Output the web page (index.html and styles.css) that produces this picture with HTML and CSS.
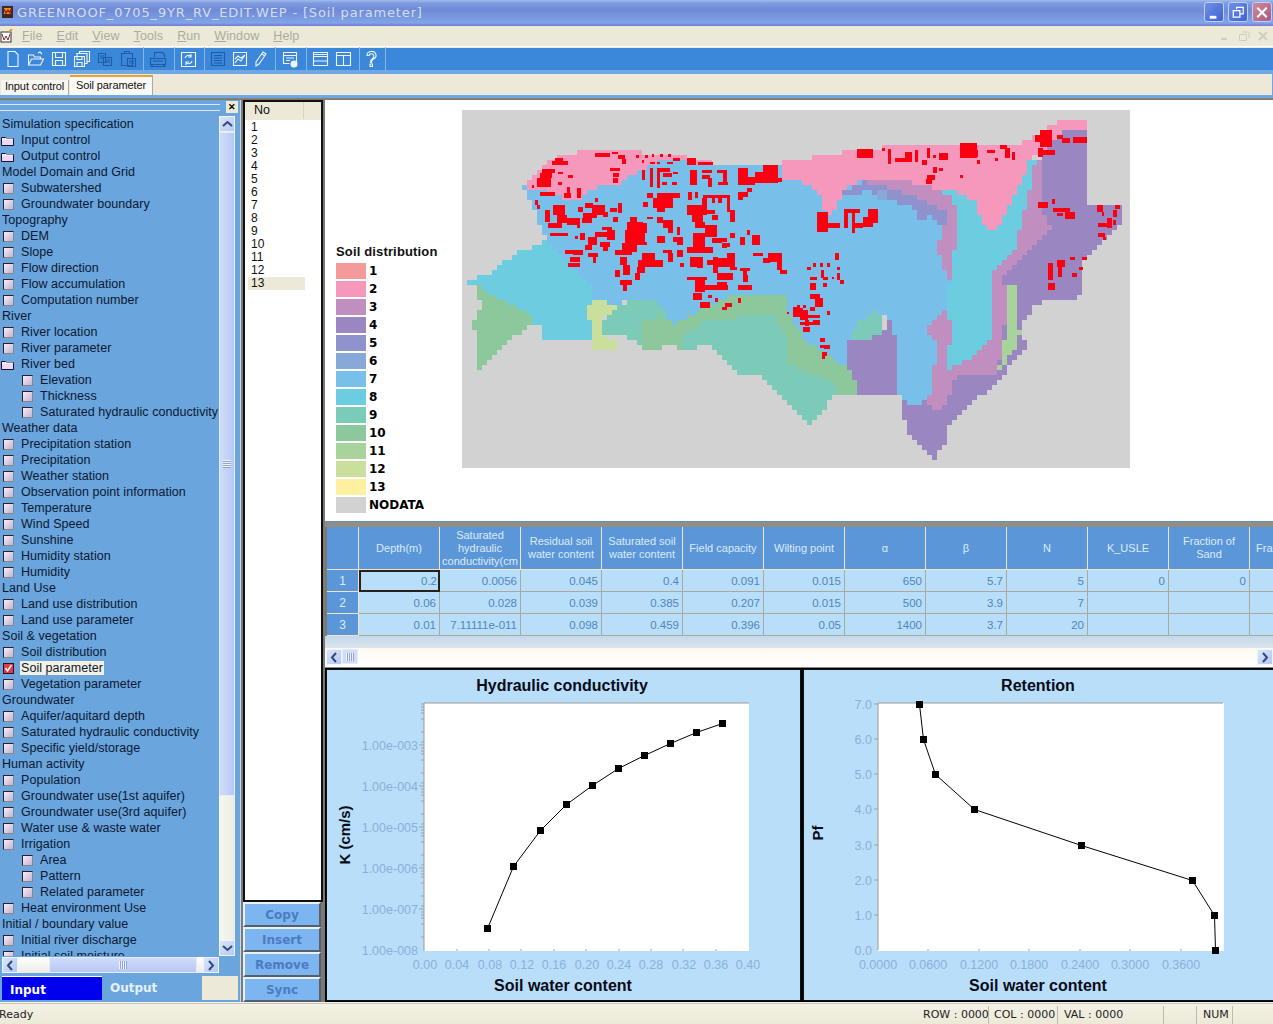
FILE: index.html
```
<!DOCTYPE html>
<html lang="en">
<head>
<meta charset="utf-8">
<title>GREENROOF_0705_9YR_RV_EDIT.WEP - [Soil parameter]</title>
<link rel="stylesheet" href="styles.css">
</head>
<body>
<div class="app">
  <header class="titlebar">
    <svg class="appicon" width="14" height="16" viewBox="0 0 14 16"><rect x="1" y="2" width="11" height="12" fill="#3a2a20"/><rect x="3" y="4" width="7" height="6" fill="#e0a020"/><path d="M3 5l2 4 2-3 2 3 1-4" fill="none" stroke="#b01818" stroke-width="1.5"/></svg>
    <span class="title">GREENROOF_0705_9YR_RV_EDIT.WEP - [Soil parameter]</span>
    <div class="winbtns">
      <span class="winbtn"><svg width="19" height="19" viewBox="0 0 19 19"><rect x="5" y="13" width="7" height="3" fill="#fff"/></svg></span>
      <span class="winbtn"><svg width="19" height="19" viewBox="0 0 19 19"><path d="M8 6V4h7v7h-3M4.500 7.500h7v7h-7z" fill="none" stroke="#fff" stroke-width="1.300"/></svg></span>
      <span class="winbtn close"><svg width="19" height="19" viewBox="0 0 19 19"><path d="M4.500 4.500l10 10M14.500 4.500l-10 10" stroke="#fff" stroke-width="2.200"/></svg></span>
    </div>
  </header>

  <nav class="menubar">
    <svg class="menuicon" width="13" height="15" viewBox="0 0 13 15"><rect x="1" y="3" width="10" height="10" fill="#fff" stroke="#333"/><path d="M2 5l2 6 2-4 2 4 2-6" fill="none" stroke="#8a2a20"/><path d="M9 3l3-3" stroke="#d0a020" stroke-width="2"/></svg>
    <span class="menuitem"><u>F</u>ile</span>
    <span class="menuitem"><u>E</u>dit</span>
    <span class="menuitem"><u>V</u>iew</span>
    <span class="menuitem"><u>T</u>ools</span>
    <span class="menuitem"><u>R</u>un</span>
    <span class="menuitem"><u>W</u>indow</span>
    <span class="menuitem"><u>H</u>elp</span>
    <div class="mdibtns">
      <svg width="19" height="14" viewBox="0 0 19 14"><rect x="5" y="9" width="6" height="2" fill="#d0cfc2"/></svg>
      <svg width="19" height="14" viewBox="0 0 19 14"><path d="M7 3h7v6M4.500 5.500h7v6h-7z" fill="none" stroke="#cfcec0"/></svg>
      <svg width="19" height="14" viewBox="0 0 19 14"><path d="M5 3l8 8M13 3l-8 8" stroke="#cfcec0" stroke-width="2"/></svg>
    </div>
  </nav>

  <div class="toolbar">
    <svg class="tool" width="16" height="18" viewBox="0 0 16 18"><path d="M3 1.500h7l3 3v12H3z"/></svg>
    <svg class="tool" width="18" height="18" viewBox="0 0 18 18"><path d="M1.500 15V5h5l1 2h6v2M1.500 15l3-6h12l-3 6zM11 3l2-1 2 2"/></svg>
    <svg class="tool" width="16" height="18" viewBox="0 0 16 18"><path d="M1.500 2.500h13v13h-13zM4.500 2.500v5h7v-5M4.500 15.500v-5h7v5"/></svg>
    <svg class="tool" width="18" height="18" viewBox="0 0 18 18"><path d="M6.500 3.500v-2h10v10h-2M4 6V3.500h10v10h-2M1.500 6.500h10v10h-10zM4 6.500v3h5v-3M4 16.500v-4h5v4"/></svg>
    <svg class="tool dim" width="16" height="18" viewBox="0 0 16 18"><path d="M1.500 3.500h7v9h-7zM6.500 7.500h8v8h-8zM3 6h4M3 8h3M8 10h5M8 12h5"/></svg>
    <svg class="tool dim" width="18" height="18" viewBox="0 0 18 18"><path d="M2.500 3.500h11v12h-11zM5.500 3.500v-2h5v2M8.500 8.500h8v8h-8zM10 11h5M10 13h5"/></svg>
    <i class="sep first"></i>
    <svg class="tool dim" width="18" height="18" viewBox="0 0 18 18"><path d="M5.500 7.500v-5h8l2 2v3M1.500 8.500h15v6h-15zM4 14.500l-2 2h14l-2-2M4 11h10"/></svg>
    <i class="sep"></i>
    <svg class="tool" width="17" height="18" viewBox="0 0 17 18"><path d="M1.500 2.500h14v14h-14zM5 8a3.500 3.500 0 0 1 6-1.500M12 11a3.500 3.500 0 0 1-6 1.500M11 4v3h-3M6 15v-3h3"/></svg>
    <i class="sep"></i>
    <svg class="tool dim" width="16" height="18" viewBox="0 0 16 18"><path d="M1.500 2.500h13v13h-13zM4 5.500h8M4 8h8M4 10.500h8M4 13h8"/></svg>
    <svg class="tool" width="16" height="18" viewBox="0 0 16 18"><path d="M1.500 2.500h13v13h-13zM3 13l3-4 3 2 4-6M3 9l3-3 3 2 4-3"/></svg>
    <svg class="tool" width="14" height="18" viewBox="0 0 14 18"><path d="M9 2l3 2-7 10-3 2v-4zM8 4l3 2"/></svg>
    <i class="sep"></i>
    <svg class="tool" width="18" height="18" viewBox="0 0 18 18"><path d="M2.500 2.500h13v11h-4M2.500 5.500h13M2.500 2.500v11h6M5 8h8M5 10.500h4"/><circle class="fillw" cx="13" cy="14" r="3.500"/></svg>
    <i class="sep"></i>
    <svg class="tool" width="17" height="18" viewBox="0 0 17 18"><path d="M1.500 2.500h14v13h-14zM1.500 6.500h14M1.500 11h14M1.500 4.500h14"/></svg>
    <svg class="tool" width="17" height="18" viewBox="0 0 17 18"><path d="M1.500 2.500h14v13h-14zM1.500 5.500h14M8.500 5.500v10"/></svg>
    <i class="sep"></i>
    <svg class="tool" width="13" height="18" viewBox="0 0 13 18"><path d="M2 5.500a4.500 4 0 1 1 6.500 3.500c-1.500 1-2 1.500-2 3.500h-1c0-2.500 1-3.500 2-4a2.500 2.500 0 1 0-3.500-3zM5 14h2.500v2.500H5z"/></svg>
    <i class="sep"></i>
  </div>

  <div class="tabstrip">
    <div class="tabs">
      <span class="tab">Input control</span>
      <span class="tab active">Soil parameter</span>
    </div>
  </div>

  <main class="workspace">
    <aside class="tree">
      <div class="grip"><span class="griplines"></span><span class="closebox">✕</span></div>
      <div class="treebody">
        <ul class="rows">
          <li class="row">Simulation specification</li>
          <li class="row"><svg class="folder" width="13" height="11" viewBox="0 0 13 11"><path d="M.5 2.500h4l1 1h7v7H.5z" fill="#f0d8f4" stroke="#201030"/><path d="M1 4h11" stroke="#fff"/></svg>Input control</li>
          <li class="row"><svg class="folder" width="13" height="11" viewBox="0 0 13 11"><path d="M.5 2.500h4l1 1h7v7H.5z" fill="#f0d8f4" stroke="#201030"/><path d="M1 4h11" stroke="#fff"/></svg>Output control</li>
          <li class="row">Model Domain and Grid</li>
          <li class="row"><i class="box"></i>Subwatershed</li>
          <li class="row"><i class="box"></i>Groundwater boundary</li>
          <li class="row">Topography</li>
          <li class="row"><i class="box"></i>DEM</li>
          <li class="row"><i class="box"></i>Slope</li>
          <li class="row"><i class="box"></i>Flow direction</li>
          <li class="row"><i class="box"></i>Flow accumulation</li>
          <li class="row"><i class="box"></i>Computation number</li>
          <li class="row">River</li>
          <li class="row"><i class="box"></i>River location</li>
          <li class="row"><i class="box"></i>River parameter</li>
          <li class="row"><svg class="folder" width="13" height="11" viewBox="0 0 13 11"><path d="M.5 2.500h4l1 1h7v7H.5z" fill="#f0d8f4" stroke="#201030"/><path d="M1 4h11" stroke="#fff"/></svg>River bed</li>
          <li class="row sub"><i class="box"></i>Elevation</li>
          <li class="row sub"><i class="box"></i>Thickness</li>
          <li class="row sub"><i class="box"></i>Saturated hydraulic conductivity</li>
          <li class="row">Weather data</li>
          <li class="row"><i class="box"></i>Precipitation station</li>
          <li class="row"><i class="box"></i>Precipitation</li>
          <li class="row"><i class="box"></i>Weather station</li>
          <li class="row"><i class="box"></i>Observation point information</li>
          <li class="row"><i class="box"></i>Temperature</li>
          <li class="row"><i class="box"></i>Wind Speed</li>
          <li class="row"><i class="box"></i>Sunshine</li>
          <li class="row"><i class="box"></i>Humidity station</li>
          <li class="row"><i class="box"></i>Humidity</li>
          <li class="row">Land Use</li>
          <li class="row"><i class="box"></i>Land use distribution</li>
          <li class="row"><i class="box"></i>Land use parameter</li>
          <li class="row">Soil &amp; vegetation</li>
          <li class="row"><i class="box"></i>Soil distribution</li>
          <li class="row"><svg class="checkbox" width="11" height="11" viewBox="0 0 11 11"><rect x=".5" y=".5" width="10" height="10" fill="#e8384a" stroke="#301018"/><path d="M2.500 5l2 3 4-6" fill="none" stroke="#fff" stroke-width="1.500"/></svg><span class="current">Soil parameter</span></li>
          <li class="row"><i class="box"></i>Vegetation parameter</li>
          <li class="row">Groundwater</li>
          <li class="row"><i class="box"></i>Aquifer/aquitard depth</li>
          <li class="row"><i class="box"></i>Saturated hydraulic conductivity</li>
          <li class="row"><i class="box"></i>Specific yield/storage</li>
          <li class="row">Human activity</li>
          <li class="row"><i class="box"></i>Population</li>
          <li class="row"><i class="box"></i>Groundwater use(1st aquifer)</li>
          <li class="row"><i class="box"></i>Groundwater use(3rd aquifer)</li>
          <li class="row"><i class="box"></i>Water use &amp; waste water</li>
          <li class="row"><i class="box"></i>Irrigation</li>
          <li class="row sub"><i class="box"></i>Area</li>
          <li class="row sub"><i class="box"></i>Pattern</li>
          <li class="row sub"><i class="box"></i>Related parameter</li>
          <li class="row"><i class="box"></i>Heat environment Use</li>
          <li class="row">Initial / boundary value</li>
          <li class="row"><i class="box"></i>Initial river discharge</li>
          <li class="row"><i class="box"></i>Initial soil moisture</li>
        </ul>
        <div class="vscroll">
          <span class="sbtn"><svg width="11" height="8" viewBox="0 0 11 8"><path d="M1 6l4.500-4 4.500 4" class="chev"/></svg></span>
          <span class="vtrack"><span class="vthumb"><i class="vgrip"></i></span></span>
          <span class="sbtn"><svg width="11" height="8" viewBox="0 0 11 8"><path d="M1 2l4.500 4 4.500-4" class="chev"/></svg></span>
        </div>
      </div>
      <div class="hscroll">
        <span class="sbtn"><svg width="8" height="11" viewBox="0 0 8 11"><path d="M6 1L2 5.500 6 10" class="chev"/></svg></span>
        <span class="htrack"><span class="hthumb"><i class="hgrip"></i></span></span>
        <span class="sbtn"><svg width="8" height="11" viewBox="0 0 8 11"><path d="M2 1l4 4.500L2 10" class="chev"/></svg></span>
      </div>
      <div class="sidetabs">
        <span class="sidetab on">Input</span>
        <span class="sidetab">Output</span>
        <span class="sideblank"></span>
      </div>
    </aside>

    <section class="middle">
      <div class="nolist">
        <div class="nohead"><span>No</span></div>
        <ol class="nos">
          <li>1</li><li>2</li><li>3</li><li>4</li><li>5</li><li>6</li><li>7</li><li>8</li><li>9</li><li>10</li><li>11</li><li>12</li><li class="picked">13</li>
        </ol>
      </div>
      <button class="act">Copy</button>
      <button class="act">Insert</button>
      <button class="act">Remove</button>
      <button class="act">Sync</button>
    </section>

    <section class="content">
      <div class="mappane">
        <div class="legend">
          <div class="legtitle">Soil distribution</div>
          <div class="legrow"><i class="sw c1"></i>1</div>
          <div class="legrow"><i class="sw c2"></i>2</div>
          <div class="legrow"><i class="sw c3"></i>3</div>
          <div class="legrow"><i class="sw c4"></i>4</div>
          <div class="legrow"><i class="sw c5"></i>5</div>
          <div class="legrow"><i class="sw c6"></i>6</div>
          <div class="legrow"><i class="sw c7"></i>7</div>
          <div class="legrow"><i class="sw c8"></i>8</div>
          <div class="legrow"><i class="sw c9"></i>9</div>
          <div class="legrow"><i class="sw c10"></i>10</div>
          <div class="legrow"><i class="sw c11"></i>11</div>
          <div class="legrow"><i class="sw c12"></i>12</div>
          <div class="legrow"><i class="sw c13"></i>13</div>
          <div class="legrow"><i class="sw c0"></i>NODATA</div>
        </div>
        <svg class="map" width="668" height="358" viewBox="462 110 668 358" shape-rendering="crispEdges">
          <defs>
            <filter id="cells" filterUnits="userSpaceOnUse" x="462" y="110" width="668" height="358" color-interpolation-filters="sRGB">
              <feFlood x="464" y="112" width="1" height="1" flood-color="#000"/>
              <feComposite width="5" height="5"/>
              <feTile result="dots"/>
              <feComposite in="SourceGraphic" in2="dots" operator="in"/>
              <feMorphology operator="dilate" radius="2"/>
            </filter>
          </defs>
          <g filter="url(#cells)">
          <polygon class="f7" points="523,187 532,203 545,237 545,242 591,287 593,302 619,303 656,298 661,308 674,323 687,318 705,307 730,297 787,293 787,313 805,340 846,367 846,338 853,338 855,325 873,312 886,315 894,330 899,393 910,407 918,407 929,397 934,370 938,343 925,330 945,310 952,287 938,253 950,200 860,165 716,165 660,155 600,170"/>
          <polygon class="f2" points="523,187 530,180 542,170 550,160 578,152 632,152 680,155 690,160 713,162 713,165 660,160 632,175 617,185 593,188 578,200 560,197 540,190"/>
          <polygon class="f2" points="780,161 800,162 810,158 857,150 930,143 1020,143 1033,137 1057,123 1067,118 1088,120 1088,130 1057,135 1040,153 1030,160 1020,183 1007,213 992,233 982,225 977,203 957,193 933,188 893,178 868,178 843,190 838,205 828,217 825,210 820,193 800,182 780,177"/>
          <polygon class="f4" points="1040,153 1057,135 1077,127 1088,130 1088,205 1120,205 1120,223 1105,238 1090,253 1080,267 1082,297 1047,300 1033,307 1023,323 1025,347 1001,377 997,385 980,397 949,423 945,443 934,460 923,447 908,433 901,403 899,393 910,407 918,407 929,397 929,407 942,410 958,373 997,375 1008,300 1003,277 1020,257 1052,230 1042,207"/>
          <polygon class="f4" points="846,338 853,338 868,340 884,332 886,315 894,330 899,393 857,396 855,380 846,367"/>
          <polygon class="f9" points="853,338 855,325 873,312 884,315 884,332 868,340"/>
          <polygon class="f3" points="868,178 893,178 933,188 957,193 977,203 982,225 992,233 1007,213 1020,183 1030,160 1040,158 1042,207 1052,230 1020,257 1003,277 1008,300 997,375 958,373 942,410 929,407 929,397 934,370 938,343 925,330 945,310 952,287 938,253 940,233 948,222 945,210 915,197 883,187 868,184"/>
          <polygon class="f5" points="843,192 868,178 868,184 883,187 915,197 945,210 948,222 940,228 932,215 925,220 918,218 913,208 885,198 880,200 868,190 845,198"/>
          <polygon class="f6" points="872,187 885,191 885,200 878,197"/>
          <polygon class="f8" points="933,188 957,193 977,203 982,225 992,233 1007,213 1020,183 1030,160 1035,158 1033,177 1020,230 1013,253 993,270 990,340 971,357 945,370 949,347 953,327 945,310 953,270 957,223 953,197"/>
          <polygon class="f8" points="545,242 520,252 503,263 490,273 470,280 469,283 477,288 530,325 543,325 545,342 591,342 589,307 593,302 591,287"/>
          <polygon class="f10" points="469,280 477,285 486,293 508,302 530,313 530,325 517,335 504,347 486,363 477,373 477,353 480,340 472,327 482,307 477,288"/>
          <polygon class="f10" points="641,320 661,317 674,323 687,318 705,307 730,297 787,293 787,313 805,340 846,367 855,380 857,395 835,396 835,383 785,363 785,337 774,313 766,313 700,323 683,337 683,350 670,345 643,352"/>
          <polygon class="f9" points="602,323 621,303 656,298 661,308 674,323 661,317 641,320 643,352 639,342 619,333 606,338 600,320"/>
          <polygon class="f9" points="683,337 700,323 766,313 774,313 785,337 785,363 835,383 835,396 820,413 814,423 805,423 783,397 761,375 735,372 722,357 709,345 683,350"/>
          <polygon class="f12" points="593,302 619,303 617,310 600,320 606,338 619,343 619,353 591,347 589,308"/>
          <polygon class="f11" points="1008,283 1015,283 1017,328 1021,333 1015,347 1001,370 997,375 1001,357 1008,323"/>
          </g>
          <g transform="translate(460 110) scale(.33333)">
            <path class="red" d="M285 145h25v8h-25zM275 153h50v12h-50zM245 178h40v12h-40zM240 190h35v15h-35zM232 205h40v25h-40zM240 245h45v12h-45zM295 185h15v8h-15zM295 215h10v10h-10zM325 195h15v10h-15zM320 230h10v20h-10zM312 250h20v15h-20zM352 235h10v30h-10zM215 225h8v8h-8zM225 270h10v15h-10zM232 285h8v12h-8zM405 130h45v12h-45zM455 125h20v8h-20zM475 135h20v12h-20zM485 147h12v15h-12zM450 175h30v8h-30zM458 190h18v12h-18zM458 205h15v15h-15zM528 135h8v10h-8zM555 135h8v10h-8zM575 133h8v8h-8zM600 133h8v8h-8zM625 133h8v8h-8zM640 145h20v8h-20zM545 150h8v8h-8zM570 155h15v8h-15zM590 155h10v8h-10zM620 155h20v8h-20zM545 180h10v30h-10zM570 175h10v55h-10zM590 175h10v60h-10zM600 175h30v10h-30zM610 190h25v10h-25zM605 215h15v10h-15zM635 215h15v10h-15zM640 185h15v8h-15zM682 145h25v20h-25zM715 155h45v10h-45zM690 180h20v8h-20zM690 190h20v35h-20zM725 180h30v10h-30zM725 195h25v12h-25zM770 180h30v10h-30zM790 190h10v30h-10zM775 215h30v10h-30zM745 205h10v25h-10zM835 175h30v50h-30zM865 200h20v25h-20zM885 185h70v35h-70zM910 165h45v20h-45zM955 205h10v10h-10zM860 235h15v10h-15zM835 245h30v15h-30zM835 260h15v10h-15zM560 250h20v15h-20zM590 250h70v15h-70zM580 265h60v30h-60zM590 295h25v10h-25zM550 275h15v15h-15zM685 245h10v25h-10zM705 245h10v20h-10zM730 255h70v8h-70zM725 265h15v25h-15zM755 265h10v15h-10zM775 265h10v15h-10zM800 255h10v50h-10zM810 300h15v35h-15zM680 285h60v30h-60zM695 315h35v20h-35zM705 335h30v20h-30zM740 300h25v12h-25zM755 315h20v15h-20zM280 285h35v30h-35zM255 300h15v35h-15zM290 315h30v25h-30zM265 340h40v15h-40zM320 325h40v20h-40zM350 340h10v15h-10zM355 290h15v15h-15zM375 280h25v15h-25zM395 285h40v30h-40zM370 310h40v15h-40zM365 325h30v15h-30zM430 305h15v15h-15zM450 295h20v10h-20zM475 280h10v30h-10zM460 320h15v15h-15zM405 265h10v10h-10zM425 350h30v10h-30zM440 360h25v30h-25zM405 365h35v15h-35zM385 380h25v25h-25zM345 378h10v10h-10zM360 370h15v20h-15zM420 395h30v15h-30zM375 405h20v15h-20zM270 368h55v10h-55zM315 420h30v12h-30zM340 420h30v15h-30zM330 440h30v15h-30zM325 458h35v12h-35zM385 430h30v10h-30zM398 440h10v20h-10zM430 410h15v12h-15zM510 320h20v30h-20zM500 335h50v45h-50zM495 360h60v45h-60zM530 340h30v30h-30zM485 400h45v25h-45zM465 420h50v15h-50zM520 395h40v10h-40zM560 320h20v8h-20zM590 320h20v20h-20zM610 330h30v25h-30zM625 355h15v15h-15zM590 378h25v20h-25zM650 350h10v25h-10zM640 380h30v15h-30zM650 395h20v10h-20zM545 430h40v20h-40zM535 450h75v20h-75zM530 470h25v20h-25zM525 490h15v20h-15zM610 420h25v10h-25zM625 430h15v25h-15zM650 420h20v20h-20zM660 458h12v12h-12zM480 440h20v25h-20zM490 465h20v30h-20zM465 480h15v20h-15zM480 510h35v15h-35zM490 525h10v18h-10zM700 370h35v55h-35zM680 410h80v18h-80zM735 345h35v35h-35zM755 385h30v15h-30zM770 385h30v12h-30zM785 400h15v15h-15zM810 370h15v15h-15zM840 380h15v25h-15zM860 360h10v15h-10zM875 375h25v30h-25zM800 400h10v12h-10zM690 440h35v30h-35zM710 460h20v15h-20zM720 440h10v20h-10zM740 450h30v15h-30zM760 440h15v50h-15zM775 445h50v25h-50zM800 430h25v20h-25zM810 470h20v10h-20zM770 490h50v20h-50zM840 475h30v8h-30zM850 480h10v35h-10zM835 525h40v15h-40zM855 495h10v20h-10zM680 500h60v10h-60zM705 510h30v35h-30zM735 525h70v15h-70zM770 515h30v10h-30zM700 550h25v20h-25zM720 575h30v20h-30zM745 555h10v10h-10zM765 565h10v10h-10zM795 580h20v10h-20zM785 592h15v8h-15zM835 565h8v15h-8zM880 430h30v8h-30zM910 445h20v15h-20zM925 430h40v25h-40zM950 455h15v25h-15zM960 480h20v12h-20zM980 605h8v8h-8zM1000 590h20v30h-20z"/>
          </g>
          <g transform="translate(800 110) scale(.33333)">
            <path class="red" d="M50 305h35v60h-35zM85 340h35v15h-35zM60 355h20v12h-20zM133 298h12v55h-12zM145 298h35v10h-35zM155 308h10v60h-10zM165 340h25v15h-25zM190 320h30v30h-30zM205 298h30v40h-30zM170 118h50v25h-50zM245 115h10v8h-10zM265 118h8v45h-8zM285 145h50v10h-50zM315 125h20v20h-20zM345 120h10v35h-10zM365 150h15v15h-15zM380 115h10v30h-10zM400 135h8v8h-8zM418 130h25v20h-25zM480 100h50v45h-50zM515 120h20v20h-20zM530 150h10v12h-10zM560 120h25v10h-25zM585 145h10v8h-10zM600 105h20v12h-20zM615 115h15v30h-15zM635 125h10v25h-10zM400 172h12v18h-12zM418 175h12v8h-12zM380 195h25v15h-25zM378 208h18v15h-18zM480 195h10v10h-10zM705 75h45v20h-45zM720 60h35v50h-35zM715 115h15v25h-15zM730 120h35v15h-35zM770 75h20v12h-20zM785 85h25v15h-25zM820 80h40v20h-40zM715 275h30v20h-30zM755 268h10v15h-10zM760 295h50v10h-50zM770 310h20v8h-20zM795 305h30v22h-30zM890 285h20v20h-20zM905 305h8v12h-8zM945 285h15v12h-15zM938 300h12v20h-12zM895 340h30v10h-30zM920 325h15v30h-15zM940 330h8v15h-8zM895 370h20v10h-20zM908 380h10v10h-10zM745 460h15v50h-15zM770 450h25v20h-25zM775 470h12v30h-12zM810 440h15v10h-15zM845 440h15v10h-15zM815 490h15v10h-15zM838 470h10v10h-10zM745 520h20v20h-20zM105 430h12v20h-12zM20 470h12v10h-12zM40 460h8v10h-8zM60 460h10v10h-10zM80 460h10v10h-10zM110 470h10v10h-10zM62 480h10v25h-10zM30 500h20v10h-20zM70 500h15v10h-15zM95 500h8v8h-8zM110 490h10v20h-10zM120 510h12v12h-12zM30 520h18v20h-18zM70 520h12v10h-12zM30 552h30v15h-30zM45 565h25v25h-25zM30 590h15v12h-15zM10 585h8v10h-8zM80 602h10v12h-10zM0 595h10v15h-10zM0 615h60v10h-60zM0 635h50v10h-50zM40 630h20v15h-20zM10 650h20v15h-20zM60 685h10v10h-10zM60 705h20v10h-20z"/>
          </g>
          <path class="red" d="M793 313h4v4h-4zM797 305h3v10h-3zM800 310h8v10h-8zM805 320h4v6h-4zM822 338h3v4h-3zM824 345h6v4h-6zM822 352h5v4h-5zM822 356h3v3h-3z"/>
        </svg>
      </div>
      <div class="paneline"></div>

      <div class="grid">
        <div class="gh corner"></div>
        <div class="gh">Depth(m)</div>
        <div class="gh">Saturated hydraulic conductivity(cm</div>
        <div class="gh">Residual soil water content</div>
        <div class="gh">Saturated soil water content</div>
        <div class="gh">Field capacity</div>
        <div class="gh">Wilting point</div>
        <div class="gh">α</div>
        <div class="gh">β</div>
        <div class="gh">N</div>
        <div class="gh">K_USLE</div>
        <div class="gh">Fraction of Sand</div>
        <div class="gh clipped">Fraction</div>

        <div class="rh">1</div>
        <div class="gc selected">0.2</div><div class="gc">0.0056</div><div class="gc">0.045</div><div class="gc">0.4</div><div class="gc">0.091</div><div class="gc">0.015</div><div class="gc">650</div><div class="gc">5.7</div><div class="gc">5</div><div class="gc">0</div><div class="gc">0</div><div class="gc"></div>

        <div class="rh">2</div>
        <div class="gc">0.06</div><div class="gc">0.028</div><div class="gc">0.039</div><div class="gc">0.385</div><div class="gc">0.207</div><div class="gc">0.015</div><div class="gc">500</div><div class="gc">3.9</div><div class="gc">7</div><div class="gc"></div><div class="gc"></div><div class="gc"></div>

        <div class="rh">3</div>
        <div class="gc">0.01</div><div class="gc">7.11111e-011</div><div class="gc">0.098</div><div class="gc">0.459</div><div class="gc">0.396</div><div class="gc">0.05</div><div class="gc">1400</div><div class="gc">3.7</div><div class="gc">20</div><div class="gc"></div><div class="gc"></div><div class="gc"></div>
      </div>
      <div class="gridfoot"></div>
      <div class="gridscroll">
        <span class="sbtn"><svg width="8" height="11" viewBox="0 0 8 11"><path d="M6 1L2 5.500 6 10" class="chev"/></svg></span>
        <span class="gthumb"><i class="hgrip"></i></span>
        <span class="gspacer"></span>
        <span class="sbtn"><svg width="8" height="11" viewBox="0 0 8 11"><path d="M2 1l4 4.500L2 10" class="chev"/></svg></span>
      </div>

      <div class="charts">
        <div class="chart">
          <svg width="473" height="331" viewBox="327 670 473 331" class="plot">
            <rect class="plotbg" x="424" y="703" width="325" height="248"/>
            <path class="axis" d="M424 703H749M424 703V951"/>
            <path class="tickm" d="M419 745h5M419 786h5M419 827h5M419 868h5M419 909h5M421 704h3M421 707h3M421 710h3M421 713h3M421 719h3M421 732h3M421 742h3M421 748h3M421 751h3M421 754h3M421 760h3M421 773h3M421 783h3M421 789h3M421 792h3M421 795h3M421 801h3M421 814h3M421 824h3M421 830h3M421 833h3M421 836h3M421 842h3M421 855h3M421 865h3M421 871h3M421 874h3M421 877h3M421 883h3M421 896h3M421 906h3M421 912h3M421 915h3M421 918h3M421 924h3M421 937h3M457 951v-2M489 951v-2M521 951v-2M554 951v-2M586 951v-2M619 951v-2M651 951v-2M683 951v-2M716 951v-2"/>
            <text class="ty" x="418" y="750">1.00e-003</text>
            <text class="ty" x="418" y="791">1.00e-004</text>
            <text class="ty" x="418" y="832">1.00e-005</text>
            <text class="ty" x="418" y="873">1.00e-006</text>
            <text class="ty" x="418" y="914">1.00e-007</text>
            <text class="ty" x="418" y="955">1.00e-008</text>
            <text class="tx" x="425" y="969">0.00</text><text class="tx" x="457" y="969">0.04</text><text class="tx" x="490" y="969">0.08</text><text class="tx" x="522" y="969">0.12</text><text class="tx" x="554" y="969">0.16</text><text class="tx" x="587" y="969">0.20</text><text class="tx" x="619" y="969">0.24</text><text class="tx" x="651" y="969">0.28</text><text class="tx" x="684" y="969">0.32</text><text class="tx" x="716" y="969">0.36</text><text class="tx" x="748" y="969">0.40</text>
            <polyline class="line" points="487.500,928.500 513.500,866.500 540.500,830.500 566.500,804.500 592.500,785.500 618.500,768.500 644.500,755.500 670.500,743.500 696.500,732.500 722.500,723.500"/>
            <path class="mark" d="M484 925h7v7h-7zM510 863h7v7h-7zM537 827h7v7h-7zM563 801h7v7h-7zM589 782h7v7h-7zM615 765h7v7h-7zM641 752h7v7h-7zM667 740h7v7h-7zM693 729h7v7h-7zM719 720h7v7h-7z"/>
            <text class="ct" x="562" y="691">Hydraulic conductivity</text>
            <text class="cx" x="563" y="991">Soil water content</text>
            <text class="cy" transform="translate(350 835) rotate(-90)">K (cm/s)</text>
          </svg>
        </div>
        <div class="chart">
          <svg width="470" height="331" viewBox="804 670 470 331" class="plot">
            <rect class="plotbg" x="878" y="703" width="346" height="248"/>
            <path class="axis" d="M878 703H1223M878 703V950"/>
            <path class="tickm" d="M874 704h4M874 739h4M874 774h4M874 809h4M874 845h4M874 880h4M874 915h4M928 951v-2M979 951v-2M1029 951v-2M1080 951v-2M1130 951v-2M1181 951v-2"/>
            <text class="ty" x="872" y="709">7.0</text><text class="ty" x="872" y="744">6.0</text><text class="ty" x="872" y="779">5.0</text><text class="ty" x="872" y="814">4.0</text><text class="ty" x="872" y="850">3.0</text><text class="ty" x="872" y="885">2.0</text><text class="ty" x="872" y="920">1.0</text><text class="ty" x="872" y="955">0.0</text>
            <text class="tx" x="878" y="969">0.0000</text><text class="tx" x="928" y="969">0.0600</text><text class="tx" x="979" y="969">0.1200</text><text class="tx" x="1029" y="969">0.1800</text><text class="tx" x="1080" y="969">0.2400</text><text class="tx" x="1130" y="969">0.3000</text><text class="tx" x="1181" y="969">0.3600</text>
            <polyline class="line" points="919.500,704.500 923.500,739.500 935.500,774.500 974.500,809.500 1081.500,845.500 1192.500,880.500 1214.500,915.500 1215.500,950.500"/>
            <path class="mark" d="M916 701h7v7h-7zM920 736h7v7h-7zM932 771h7v7h-7zM971 806h7v7h-7zM1078 842h7v7h-7zM1189 877h7v7h-7zM1211 912h7v7h-7zM1212 947h7v7h-7z"/>
            <text class="ct" x="1038" y="691">Retention</text>
            <text class="cx" x="1038" y="991">Soil water content</text>
            <text class="cy" transform="translate(823 833) rotate(-90)">Pf</text>
          </svg>
        </div>
      </div>
    </section>
  </main>

  <footer class="status">
    <span class="ready">Ready</span>
    <span class="cell c-row">ROW : 0000</span>
    <span class="cell c-col">COL : 0000</span>
    <span class="cell c-val">VAL : 0000</span>
    <span class="cell c-empty"></span>
    <span class="cell c-num">NUM</span>
  </footer>
</div>
</body>
</html>
```
FILE: styles.css
```
* { box-sizing: border-box; }
html, body { margin: 0; padding: 0; }
body { width: 1273px; height: 1024px; overflow: hidden; font-family: "Liberation Sans", Arial, sans-serif; font-size: 12px; background: #ece9d8; }
ul, ol { list-style: none; margin: 0; padding: 0; }
.app { width: 1273px; height: 1024px; display: flex; flex-direction: column; }

.titlebar { height: 26px; flex: none; display: flex; align-items: center; background: linear-gradient(#a3bcec 0, #7e9ce0 3px, #6f8ad6 10px, #7a9ae0 18px, #7fa6ea 23px, #7a80d4 25px); padding: 0 0 2px 1px; }
.appicon { flex: none; }
.title { margin-left: 2px; color: #d3ddf2; font-family: "DejaVu Sans", sans-serif; font-size: 13px; letter-spacing: .84px; white-space: nowrap; }
.winbtns { margin-left: auto; display: flex; gap: 4px; padding-right: 1px; }
.winbtn { width: 20px; height: 20px; border-radius: 3px; background: linear-gradient(135deg, #6f90e8, #3f62d0); border: 1px solid #c0d0f0; display: flex; }
.winbtn.close { background: linear-gradient(135deg, #d08a98, #a85a80); }

.menubar { height: 20px; flex: none; display: flex; align-items: center; background: #ece9d8; color: #aeab9d; font-size: 12.500px; letter-spacing: .08px; }
.menuicon { flex: none; }
.menuitem { margin-left: 14px; }
.menuicon + .menuitem { margin-left: 9px; }
.mdibtns { margin-left: auto; display: flex; }

.toolbar { height: 27px; flex: none; display: flex; align-items: center; background: #3b87d9; border-top: 1px solid #fff; border-bottom: 3px solid #6fa8e2; box-shadow: inset 0 1px 0 #ece9d8; padding-left: 5px; }
.tool { flex: none; fill: none; stroke: #f0f5fb; stroke-width: 1.100; margin-right: 6px; }
.tool.dim { stroke: #1f5da8; }
.tool .fillw { fill: #f0f5fb; stroke: none; }
.sep { width: 1px; height: 23px; flex: none; background: #86b6e8; margin-right: 5px; margin-left: 1px; }
.sep.first { margin-left: 0; }

.tabstrip { height: 22px; flex: none; background: #ece9d8; border: 1px solid #6fa8e2; border-width: 1px 1px 0 0; }
.tabs { height: 100%; display: flex; align-items: flex-end; padding-left: 1px; gap: 1px; }
.tab { height: 15px; width: 68px; display: flex; align-items: flex-start; justify-content: center; background: #f7f6f0; font-size: 11px; letter-spacing: -.1px; color: #111; border-right: 1px solid #aaa; }
.tab.active { width: 83px; height: 20px; background: #fbfaf5; border-top: 2px solid #e8a030; padding-top: 2px; }

.workspace { flex: 1; min-height: 0; display: flex; background: #7a7a72; border-top: 3px solid #6fa8e2; box-shadow: inset 0 1px 0 #8a8270; gap: 2px; padding-top: 2px; }

.tree { width: 241px; height: 902px; flex: none; display: flex; flex-direction: column; background: #6aa5de; border-right: 1px solid #ccd8e8; }
.grip { height: 16px; flex: none; display: flex; align-items: flex-start; padding: 1px 2px 0 0; gap: 6px; }
.griplines { flex: 1; height: 7px; margin-top: 3px; border-top: 1px solid #dbe8f6; border-bottom: 1px solid #dbe8f6; }
.closebox { width: 12px; height: 12px; background: #ece9d8; font-size: 9px; line-height: 12px; text-align: center; font-weight: bold; color: #000; }
.treebody { height: 840px; flex: none; display: flex; overflow: hidden; padding-right: 6px; }
.rows { width: 219px; flex: none; overflow: hidden; }
.row { height: 16px; display: flex; align-items: center; padding-left: 2px; white-space: nowrap; color: #0b1830; font-size: 12.500px; letter-spacing: .05px; }
.row.sub { padding-left: 21px; }
.box { width: 11px; height: 11px; flex: none; margin: 0 7px 0 1px; background: linear-gradient(135deg, #f6eef6, #c4b0d4); border: 1px solid #2a2030; border-right-color: #888; border-bottom-color: #888; }
.folder { flex: none; margin-right: 7px; margin-left: -1px; }
.checkbox { flex: none; margin: 0 7px 0 1px; }
.current { background: #f3f1e6; padding: 0 1px; margin-left: -1px; }

.vscroll { width: 16px; flex: none; display: flex; flex-direction: column; background: #f4f4f0; }
.sbtn { width: 16px; height: 16px; flex: none; display: flex; align-items: center; justify-content: center; background: linear-gradient(135deg, #dce6fb, #b4c8f2); border: 1px solid #eef3fd; }
.chev { fill: none; stroke: #2f4a80; stroke-width: 2; }
.vtrack { flex: 1; display: flex; flex-direction: column; background: linear-gradient(90deg, #f8f8f2, #ecece4); }
.vthumb { height: 664px; display: flex; align-items: center; justify-content: center; background: linear-gradient(90deg, #d0dcfa, #b8c8f4); border: 1px solid #e4ecfc; }
.vgrip { width: 8px; height: 8px; background: repeating-linear-gradient(#eef3fd 0 1px, #8ea4d8 1px 2px); }
.hscroll { height: 16px; flex: none; display: flex; margin: 1px 0 0 2px; width: 217px; }
.htrack { flex: 1; background: linear-gradient(#fff, #ecece4); padding-left: 31px; padding-right: 6px; display: flex; }
.hthumb { flex: 1; display: flex; align-items: center; justify-content: center; background: linear-gradient(#d0dcfa, #b8c8f4); border: 1px solid #e4ecfc; }
.hgrip { width: 8px; height: 8px; background: repeating-linear-gradient(90deg, #eef3fd 0 1px, #8ea4d8 1px 2px); }
.sidetabs { height: 24px; flex: none; display: flex; margin: 3px 2px 0 2px; }
.sidetab { width: 100px; display: flex; align-items: center; padding-left: 8px; color: #e6f0fb; font-family: "DejaVu Sans", sans-serif; font-weight: bold; font-size: 12px; }
.sidetab.on { background: #0000ee; color: #fff; padding-left: 8px; padding-top: 2px; border-top: 1px solid #fff; }
.sideblank { flex: 1; background: #ece9d8; }

.middle { width: 80px; height: 902px; flex: none; display: flex; flex-direction: column; }
.nolist { height: 802px; flex: none; background: #fff; border: 2px solid #111; }
.nohead { height: 18px; background: #ece9d8; padding-left: 9px; font-size: 12.500px; line-height: 16px; color: #111; }
.nohead span { display: block; width: 50px; height: 17px; border-right: 1px solid #d8d4c4; }
.nos { padding: 1px 16px 0 3px; }
.nos li { height: 13px; line-height: 13px; padding-left: 3px; font-size: 12px; color: #111; }
.nos .picked { background: #ece9d8; }
.act { height: 25px; width: 78px; flex: none; margin: 0; padding: 0; background: #7db5f0; color: #4a7cc2; font-family: "DejaVu Sans", sans-serif; font-weight: bold; font-size: 12px; border: 2px solid; border-color: #e8f0f8 #55606c #55606c #e8f0f8; }

.content { flex: 1; min-width: 0; height: 902px; display: flex; flex-direction: column; }
.mappane { height: 421px; flex: none; display: flex; background: #fff; align-items: flex-start; padding: 10px 0 0 11px; }
.legend { width: 126px; flex: none; margin-top: 134px; }
.legtitle { font-weight: bold; font-size: 13px; letter-spacing: .15px; height: 18px; line-height: 16px; color: #111; white-space: nowrap; }
.legrow { display: flex; align-items: center; height: 18px; font-weight: bold; font-family: "DejaVu Sans", sans-serif; font-size: 12px; color: #000; }
.sw { width: 30px; height: 16px; margin-right: 3px; flex: none; }
.c0 { background: #d2d2d2; } .c1 { background: #f59a9a; } .c2 { background: #f598bb; } .c3 { background: #c08fbf; } .c4 { background: #9a86c0; } .c5 { background: #8f92cc; } .c6 { background: #88a8d8; } .c7 { background: #78c0ea; } .c8 { background: #6dcde0; } .c9 { background: #7ccab8; } .c10 { background: #8cc89c; } .c11 { background: #a8d49c; } .c12 { background: #cadf9c; } .c13 { background: #fdf0a0; }
.map { flex: none; display: block; background: #d2d2d2; }
.f2 { fill: #f598bb; } .f3 { fill: #c08fbf; } .f4 { fill: #9a86c0; } .f5 { fill: #8f92cc; } .f6 { fill: #88a8d8; } .f7 { fill: #78c0ea; } .f8 { fill: #6dcde0; } .f9 { fill: #7ccab8; } .f10 { fill: #8cc89c; } .f11 { fill: #a8d49c; } .f12 { fill: #cadf9c; }
.red { fill: #fb0010; }
.paneline { height: 6px; flex: none; background: #8f8f88; border-top: 1px solid #6a8db5; }

.grid { flex: none; display: grid; grid-template-columns: 32px repeat(12, 81px); grid-template-rows: 43px repeat(3, 22px); overflow: hidden; background: #b8def9; margin-left: 2px; width: 946px; }
.gh { background: #5b96d8; color: #dcebfa; display: flex; align-items: center; justify-content: center; text-align: center; font-size: 11px; line-height: 13px; padding: 0 1px; border-right: 1px solid #f0e4d0; border-bottom: 1px solid #f0e4d0; overflow: hidden; }
.gh.clipped { justify-content: flex-start; white-space: nowrap; padding-left: 6px; }
.rh { background: #5b96d8; color: #dcebfa; display: flex; align-items: center; justify-content: center; font-size: 12px; border-right: 1px solid #f0e4d0; border-bottom: 1px solid #f0e4d0; }
.gc { background: #b8def9; color: #4f86bd; display: flex; align-items: center; justify-content: flex-end; padding-right: 3px; font-size: 11.500px; border-right: 1px solid #a9a9a0; border-bottom: 1px solid #a9a9a0; white-space: nowrap; }
.gc.selected { border: 2px solid #2a2018; padding-right: 1px; }
.gridfoot { height: 12px; flex: none; background: linear-gradient(#c4d8ea, #dbe6ee); }
.gridscroll { height: 20px; flex: none; display: flex; padding: 1px 0 3px 1px; background: linear-gradient(#fff8f0, #fff); border-bottom: 1px solid #888; }
.gthumb { width: 16px; flex: none; display: flex; align-items: center; justify-content: center; background: #d0dcfa; border: 1px solid #e4ecfc; }
.gspacer { flex: 1; }

.charts { flex: 1; min-height: 0; display: flex; background: #7a7a72; }
.chart { height: 334px; flex: none; background: #b8def9; border: 1px solid #000; outline: 1px solid #111; outline-offset: -2px; padding: 1px; }
.plot { display: block; }
.plotbg { fill: #fff; }
.axis { fill: none; stroke: #9a9a9a; }
.tickm { fill: none; stroke: #a0a0a0; }
.ty { font-size: 12.500px; fill: #8bb0dc; text-anchor: end; }
.tx { font-size: 12.500px; fill: #8bb0dc; text-anchor: middle; }
.line { fill: none; stroke: #000; stroke-width: 1; }
.mark { fill: #000; }
.ct { font-size: 16px; font-weight: bold; fill: #0a0a18; text-anchor: middle; }
.cx { font-size: 16px; font-weight: bold; fill: #0a0a18; text-anchor: middle; }
.cy { font-size: 15px; font-weight: bold; fill: #0a0a18; text-anchor: middle; }

.status { height: 22px; flex: none; display: flex; align-items: center; background: linear-gradient(#f4f2e6, #ece9d8); border-top: 1px solid #f4f4ec; box-shadow: inset 0 1px 0 #c8c6b8; font-family: "DejaVu Sans", sans-serif; font-size: 11px; color: #222; padding-top: 2px; }
.ready { width: 921px; margin-left: -1px; flex: none; }
.cell { height: 18px; display: flex; align-items: center; border-right: 1px solid #bdbaa8; padding-left: 3px; flex: none; white-space: nowrap; }
.c-row { width: 69px; } .c-col { width: 69px; padding-left: 5px; } .c-val { width: 106px; padding-left: 6px; } .c-empty { width: 33px; } .c-num { width: 36px; padding-left: 6px; }
```
